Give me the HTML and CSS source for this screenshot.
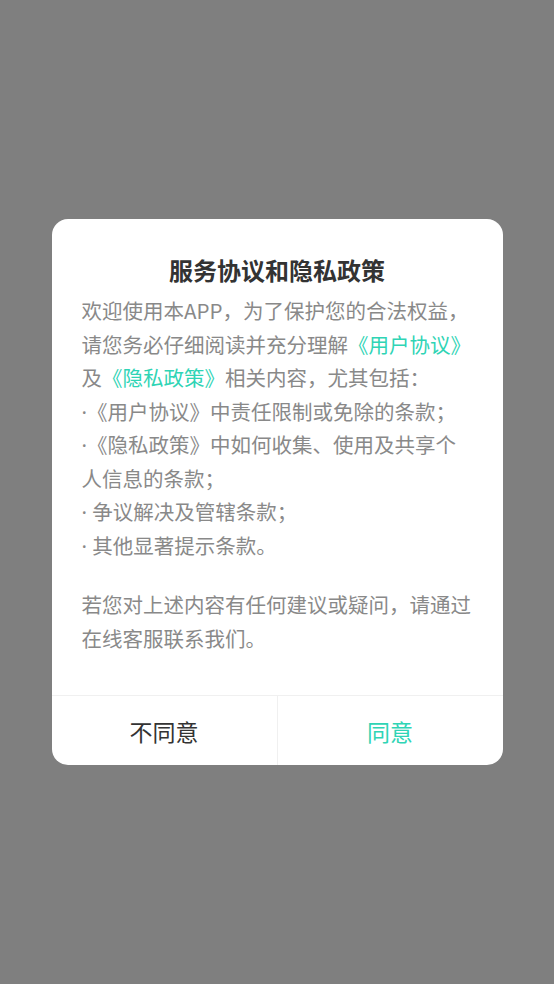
FILE: index.html
```html
<!DOCTYPE html>
<html lang="zh-CN">
<head>
<meta charset="utf-8">
<title>服务协议和隐私政策</title>
<link rel="stylesheet" href="styles.css">
</head>
<body>
<div class="mask">
  <div class="dialog">
    <div class="content">
      <h1 class="title">服务协议和隐私政策</h1>
      <p class="para">欢迎使用本APP，为了保护您的合法权益，请您务必仔细阅读并充分理解<span class="link">《用户协议》</span>及<span class="link">《隐私政策》</span>相关内容，尤其包括：</p>
      <div class="item"><span class="dot">·</span>《用户协议》中责任限制或免除的条款；</div>
      <div class="item"><span class="dot">·</span>《隐私政策》中如何收集、使用及共享个人信息的条款；</div>
      <div class="item"><span class="dot">· </span>争议解决及管辖条款；</div>
      <div class="item"><span class="dot">· </span>其他显著提示条款。</div>
      <p class="para para-gap">若您对上述内容有任何建议或疑问，请通过在线客服联系我们。</p>
    </div>
    <div class="actions">
      <div class="btn btn-cancel">不同意</div>
      <div class="btn btn-ok">同意</div>
    </div>
  </div>
</div>
</body>
</html>
```
FILE: styles.css
```css
html, body {
  margin: 0;
  padding: 0;
  height: 100%;
}
body {
  background: #7f7f7f;
  font-family: "Noto Sans CJK SC", "Noto Sans", sans-serif;
  text-spacing-trim: space-all;
}
.mask {
  height: 100vh;
  display: flex;
  align-items: center;
  justify-content: center;
}
.dialog {
  width: 451px;
  background: #fff;
  border-radius: 16px;
  overflow: hidden;
}
.content {
  padding: 34px 30px 40px 30px;
}
.title {
  margin: 0 0 8px;
  font-size: 24px;
  line-height: 33.5px;
  font-weight: 700;
  color: #333;
  text-align: center;
}
.para, .item {
  margin: 0;
  font-size: 20.5px;
  line-height: 33.5px;
  color: #898989;
}
.dot {
  font-family: "Noto Sans", "DejaVu Sans", sans-serif;
  line-height: 0;
}
.para-gap {
  margin-top: 26px;
}
.link {
  color: #2fd4b5;
}
.actions {
  display: flex;
  border-top: 1px solid #f0f0f0;
}
.btn {
  flex: 1;
  height: 69px;
  display: flex;
  align-items: center;
  justify-content: center;
  font-size: 23px;
}
.btn-cancel {
  color: #333;
  border-right: 1px solid #f0f0f0;
}
.btn-ok {
  color: #2fd4b5;
}
```
